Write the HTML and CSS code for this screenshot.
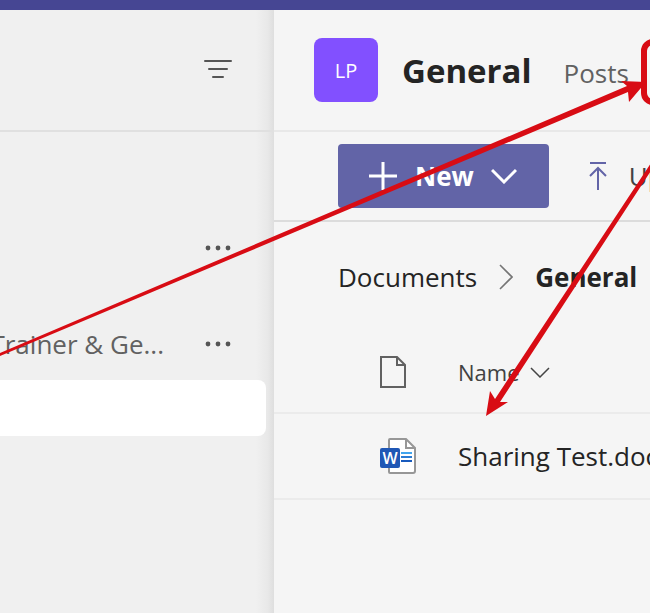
FILE: index.html
```html
<!DOCTYPE html>
<html lang="en">
<head>
    <meta charset="UTF-8">
    <meta name="viewport" content="width=device-width, initial-scale=1.0">
    <title>General - Files</title>
    <link rel="stylesheet" href="styles.css">
</head>
<body>
    <div class="top-bar"></div>

    <div class="app">
        <aside class="sidebar">
            <div class="sidebar-header">
                <button class="icon-button" aria-label="Filter">
                    <svg width="28" height="20" viewBox="0 0 28 20" stroke="#555" stroke-width="2" stroke-linecap="round">
                        <path d="M1 1h26M5 9h18M9 17h10"/>
                    </svg>
                </button>
            </div>
            <ul class="team-list">
                <li class="team">
                    <span class="team-name"></span>
                    <button class="icon-button" aria-label="More options">
                        <svg width="28" height="6" viewBox="0 0 28 6" fill="#555">
                            <circle cx="4" cy="3" r="2.4"/><circle cx="14" cy="3" r="2.4"/><circle cx="24" cy="3" r="2.4"/>
                        </svg>
                    </button>
                </li>
                <li class="team">
                    <span class="team-name">Trainer &amp; Ge...</span>
                    <button class="icon-button" aria-label="More options">
                        <svg width="28" height="6" viewBox="0 0 28 6" fill="#555">
                            <circle cx="4" cy="3" r="2.4"/><circle cx="14" cy="3" r="2.4"/><circle cx="24" cy="3" r="2.4"/>
                        </svg>
                    </button>
                </li>
                <li class="channel selected"></li>
            </ul>
        </aside>

        <main class="content">
            <header class="channel-header">
                <div class="avatar">LP</div>
                <div class="channel-title">
                    <h1>General</h1>
                    <a class="tab" href="#">Posts</a>
                </div>
            </header>

            <div class="toolbar">
                <button class="new-button">
                    <svg width="30" height="30" viewBox="0 0 30 30" fill="none" stroke="#fff" stroke-width="3">
                        <path d="M15 1v28M1 15h28"/>
                    </svg>
                    <span>New</span>
                    <svg width="26" height="16" viewBox="0 0 26 16" fill="none" stroke="#fff" stroke-width="3">
                        <path d="M1 2l12 12L25 2"/>
                    </svg>
                </button>
                <button class="upload-button">
                    <svg width="18" height="30" viewBox="0 0 18 30" fill="none" stroke="#6264a7" stroke-width="2">
                        <path d="M1 2h16M9 29V7M1 15l8-8 8 8"/>
                    </svg>
                    <span>Upload</span>
                </button>
            </div>

            <nav class="breadcrumb">
                <a href="#">Documents</a>
                <svg width="14" height="26" viewBox="0 0 14 26" fill="none" stroke="#757575" stroke-width="1.6">
                    <path d="M1 1l12 12L1 25"/>
                </svg>
                <strong>General</strong>
            </nav>

            <table class="files">
                <thead>
                    <tr>
                        <th class="type">
                            <svg width="28" height="34" viewBox="0 0 28 34" fill="none" stroke="#616161" stroke-width="2">
                                <path d="M2 2h16l8 8v22H2zM18 2v8h8"/>
                            </svg>
                        </th>
                        <th>
                            <button class="sort-button">
                                Name
                                <svg width="20" height="12" viewBox="0 0 20 12" fill="none" stroke="#444" stroke-width="1.5">
                                    <path d="M1 2l9 9 9-9"/>
                                </svg>
                            </button>
                        </th>
                    </tr>
                </thead>
                <tbody>
                    <tr>
                        <td class="type">
                            <svg width="38" height="38" viewBox="0 0 38 38">
                                <path d="M11 2h16l9 9v23q0 2-2 2H11q-1 0-1-1V3q0-1 1-1z" fill="#fff" stroke="#979797" stroke-width="2"/>
                                <path d="M27 2v9h9" fill="none" stroke="#979797" stroke-width="2"/>
                                <path d="M22 16h11" stroke="#41a5ee" stroke-width="2"/>
                                <path d="M22 20h11" stroke="#2b7cd3" stroke-width="2"/>
                                <path d="M22 24h11" stroke="#185abd" stroke-width="2"/>
                                <rect x="1" y="11" width="20" height="20" rx="2" fill="#1f57b5"/>
                                <text class="word-letter" x="11" y="27" text-anchor="middle">W</text>
                            </svg>
                        </td>
                        <td class="name"><a href="#">Sharing Test.docx</a></td>
                    </tr>
                </tbody>
            </table>
        </main>
    </div>

    <svg class="annotations" aria-hidden="true">
        <rect x="644" y="42" width="90" height="60" rx="9" fill="none" stroke="#d80c14" stroke-width="6"/>
        <path fill="#d80c14" d="M0 353L627 86 621 81 646 82 629 102 628 92 0 356z"/>
        <path fill="#d80c14" d="M653 160L495 399 490 391 486 416 508 402 500 402 656 163z"/>
    </svg>
</body>
</html>
```

FILE: styles.css
```css
* {
    box-sizing: border-box;
}

body {
    margin: 0;
    min-height: 100vh;
    display: flex;
    flex-direction: column;
    position: relative;
    overflow: hidden;
    font-family: "Open Sans", "Noto Sans", sans-serif;
    font-size: 26px;
    color: #242424;
    background-color: #f5f5f5;
}

button {
    font: inherit;
    color: inherit;
    background: none;
    border: none;
    padding: 0;
    cursor: pointer;
}

a {
    color: inherit;
    text-decoration: none;
}

svg {
    display: block;
    flex: none;
}

.top-bar {
    height: 10px;
    background-color: #464693;
}

.app {
    flex: 1;
    display: grid;
    grid-template-columns: 274px minmax(0, 1fr);
}

/* left column */
.sidebar {
    background: linear-gradient(to left, #dedede, #e8e8e8 6px, #f0f0f0 18px);
    overflow: hidden;
}

.sidebar-header {
    height: 122px;
    padding-right: 42px;
    border-bottom: 2px solid #e0e0e0;
    display: flex;
    align-items: center;
    justify-content: flex-end;
}

.team-list {
    list-style: none;
    margin: 0;
    padding: 80px 0 0;
}

.team {
    height: 72px;
    padding-right: 42px;
    display: flex;
    align-items: center;
    justify-content: flex-end;
    gap: 40px;
    color: #616161;
    white-space: nowrap;
}

.team + .team {
    margin-top: 24px;
}

.channel {
    height: 56px;
    margin-right: 8px;
    border-radius: 0 8px 8px 0;
}

.channel.selected {
    background-color: #fff;
}

/* right column */
.content {
    overflow: hidden;
}

.channel-header {
    height: 122px;
    padding-left: 40px;
    border-bottom: 2px solid #e8e8e8;
    display: flex;
    align-items: center;
    gap: 24px;
}

.avatar {
    width: 64px;
    height: 64px;
    border-radius: 8px;
    background-color: #8250ff;
    color: #fff;
    font-size: 20px;
    display: flex;
    align-items: center;
    justify-content: center;
}

.channel-title {
    display: flex;
    align-items: baseline;
    gap: 32px;
}

h1 {
    margin: 0;
    font-size: 33px;
    font-weight: 700;
}

.tab {
    color: #616161;
}

.toolbar {
    height: 90px;
    padding: 0 64px;
    border-bottom: 2px solid #dcdcdc;
    display: flex;
    align-items: center;
    gap: 40px;
    white-space: nowrap;
}

.new-button {
    flex: none;
    height: 64px;
    padding: 0 32px 0 30px;
    border-radius: 4px;
    background-color: #6264a7;
    color: #fff;
    font-weight: 700;
    display: flex;
    align-items: center;
    gap: 17px;
}

.upload-button {
    flex: none;
    display: flex;
    align-items: center;
    gap: 22px;
    color: #424242;
}

.breadcrumb {
    height: 110px;
    padding-left: 64px;
    display: flex;
    align-items: center;
    gap: 22px;
}

.files {
    width: 100%;
    table-layout: fixed;
    border-collapse: separate;
    border-spacing: 0;
}

.files th,
.files td {
    height: 86px;
    padding: 0;
    border-bottom: 2px solid #ebebeb;
    text-align: left;
    white-space: nowrap;
    overflow: hidden;
}

.files th {
    height: 82px;
    font-size: 22px;
    font-weight: 400;
    color: #424242;
}

.files .type {
    width: 184px;
    padding-left: 105px;
}

.sort-button {
    display: flex;
    align-items: center;
    gap: 10px;
}

.word-letter {
    fill: #fff;
    font-size: 16px;
    font-weight: 600;
}

/* arrows and frame over the page */
.annotations {
    position: absolute;
    top: 0;
    left: 0;
    width: 100%;
    height: 100%;
    pointer-events: none;
}
```
